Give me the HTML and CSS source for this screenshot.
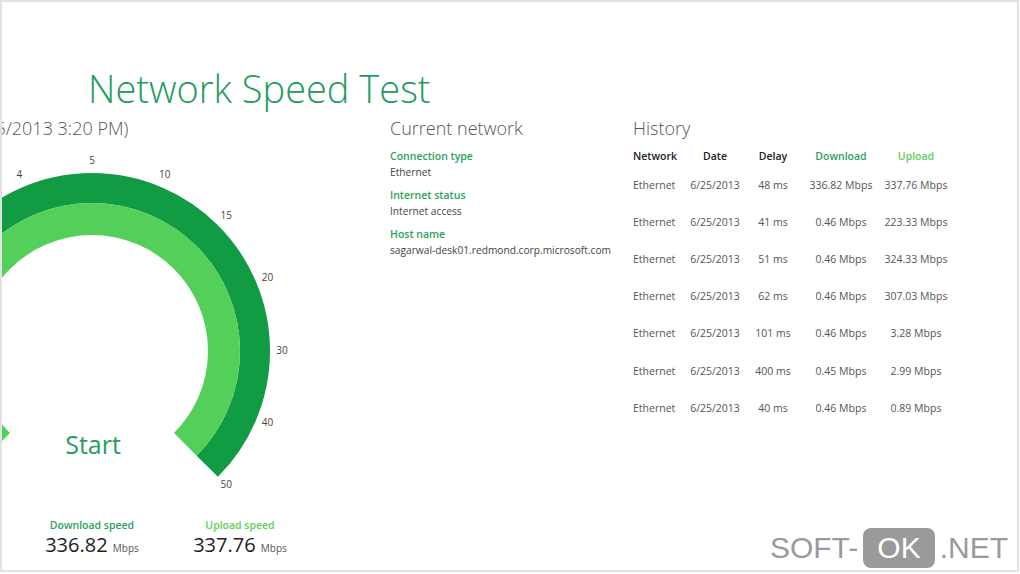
FILE: index.html
```html
<!DOCTYPE html>
<html>
<head>
  <meta charset="utf-8">
  <title>Network Speed Test</title>
  <link rel="stylesheet" href="styles.css">
</head>
<body>
<div class="frame">

  <h1 class="title">Network Speed Test</h1>

  <div class="content">

    <!-- gauge column -->
    <div class="left">
      <div class="last-test">Last test (6/25/2013 3:20 PM)</div>

      <svg class="gauge" width="300" height="350" viewBox="0 0 300 350">
        <path d="M -23.26 315.26 A 163 163 0 1 1 207.26 315.26" fill="none" stroke="#119b43" stroke-width="30"/>
        <path d="M -1.34 293.34 A 132 132 0 1 1 185.34 293.34" fill="none" stroke="#54cf5a" stroke-width="32"/>
        <g class="ticks" text-anchor="middle" dominant-baseline="middle">
          <text x="19.3" y="24.5">4</text>
          <text x="92" y="10">5</text>
          <text x="164.7" y="24.5">10</text>
          <text x="226.3" y="65.6">15</text>
          <text x="267.5" y="127.3">20</text>
          <text x="282" y="200">30</text>
          <text x="267.5" y="272.7">40</text>
          <text x="226.3" y="334.4">50</text>
        </g>
        <text class="start" x="93" y="303" text-anchor="middle">Start</text>
      </svg>

      <div class="speeds">
        <div class="speed">
          <div class="speed-label down">Download speed</div>
          <div class="speed-value">336.82 <span>Mbps</span></div>
        </div>
        <div class="speed">
          <div class="speed-label up">Upload speed</div>
          <div class="speed-value">337.76 <span>Mbps</span></div>
        </div>
      </div>
    </div>

    <!-- current network -->
    <div class="middle">
      <h2>Current network</h2>
      <div class="field">
        <div class="field-label">Connection type</div>
        <div class="field-value">Ethernet</div>
      </div>
      <div class="field">
        <div class="field-label">Internet status</div>
        <div class="field-value">Internet access</div>
      </div>
      <div class="field">
        <div class="field-label">Host name</div>
        <div class="field-value">sagarwal-desk01.redmond.corp.microsoft.com</div>
      </div>
    </div>

    <!-- history -->
    <div class="history">
      <h2>History</h2>
      <div class="table">
        <div class="row head">
          <div>Network</div><div>Date</div><div>Delay</div><div class="down">Download</div><div class="up">Upload</div>
        </div>
        <div class="row"><div>Ethernet</div><div>6/25/2013</div><div>48 ms</div><div>336.82 Mbps</div><div>337.76 Mbps</div></div>
        <div class="row"><div>Ethernet</div><div>6/25/2013</div><div>41 ms</div><div>0.46 Mbps</div><div>223.33 Mbps</div></div>
        <div class="row"><div>Ethernet</div><div>6/25/2013</div><div>51 ms</div><div>0.46 Mbps</div><div>324.33 Mbps</div></div>
        <div class="row"><div>Ethernet</div><div>6/25/2013</div><div>62 ms</div><div>0.46 Mbps</div><div>307.03 Mbps</div></div>
        <div class="row"><div>Ethernet</div><div>6/25/2013</div><div>101 ms</div><div>0.46 Mbps</div><div>3.28 Mbps</div></div>
        <div class="row"><div>Ethernet</div><div>6/25/2013</div><div>400 ms</div><div>0.45 Mbps</div><div>2.99 Mbps</div></div>
        <div class="row"><div>Ethernet</div><div>6/25/2013</div><div>40 ms</div><div>0.46 Mbps</div><div>0.89 Mbps</div></div>
      </div>
    </div>

  </div>

  <div class="watermark">SOFT-<span class="ok">OK</span>.NET</div>
</div>
</body>
</html>
```

FILE: styles.css
```css
body {
  margin: 0;
  background: #fff;
  font-family: "Open Sans", "Noto Sans", sans-serif;
  color: #333;
}
.frame {
  position: relative;
  width: 1019px;
  height: 572px;
  box-sizing: border-box;
  border: 2px solid #e2e2e2;
  overflow: hidden;
}
.title {
  margin: 0;
  padding: 62px 0 0 86px;
  font-size: 38px;
  line-height: 48px;
  font-weight: 300;
  color: #1f9c5c;
}
.content {
  display: flex;
  margin-top: 4px;
}
.left {
  width: 388px;
  flex-shrink: 0;
}
.last-test {
  margin-left: -111px;
  font-size: 18px;
  line-height: 24px;
  font-weight: 300;
  color: #555;
  white-space: nowrap;
}
.gauge {
  display: block;
  margin: 11px 0 0 -2px;
  overflow: visible;
}
.ticks {
  font-size: 10px;
  fill: #444;
}
.start {
  font-size: 25px;
  fill: #2a9c5f;
}
.speeds {
  display: flex;
  padding-left: 16px;
  margin-top: 17px;
}
.speed {
  width: 148px;
  text-align: center;
}
.speed-label {
  font-size: 10.5px;
  font-weight: 600;
  line-height: 14px;
}
.down { color: #2aa35a; }
.up { color: #5ccf5e; }
.speed-value {
  font-size: 20px;
  line-height: 26px;
  color: #222;
}
.speed-value span {
  font-size: 10px;
  color: #555;
}
h2 {
  margin: 0;
  font-size: 18px;
  line-height: 24px;
  font-weight: 300;
  color: #555;
}
.middle {
  width: 243px;
  flex-shrink: 0;
}
.middle h2 {
  margin-bottom: 8px;
}
.field {
  margin-bottom: 7px;
}
.field-label {
  font-size: 10.5px;
  font-weight: 600;
  line-height: 16px;
  color: #2aa35a;
}
.field-value {
  font-size: 10.2px;
  line-height: 16px;
  color: #444;
  white-space: nowrap;
}
.table {
  margin-top: 5px;
}
.row {
  display: grid;
  grid-template-columns: 56px 52px 64px 72px 78px;
  height: 37.2px;
  align-items: center;
  font-size: 10.5px;
  color: #555;
  text-align: center;
  white-space: nowrap;
}
.row > div:first-child {
  text-align: left;
}
.row.head {
  height: 21px;
  font-weight: 600;
  color: #222;
}
.row.head .down { color: #2aa35a; }
.row.head .up { color: #5ccf5e; }
.watermark {
  position: absolute;
  right: 9px;
  bottom: 2px;
  display: flex;
  align-items: center;
  gap: 5px;
  font-family: "Liberation Sans", Arial, sans-serif;
  font-size: 30px;
  color: #9a9a9a;
}
.ok {
  background: #9a9a9a;
  color: #fff;
  border-radius: 8px;
  padding: 3px 14px;
}
```
